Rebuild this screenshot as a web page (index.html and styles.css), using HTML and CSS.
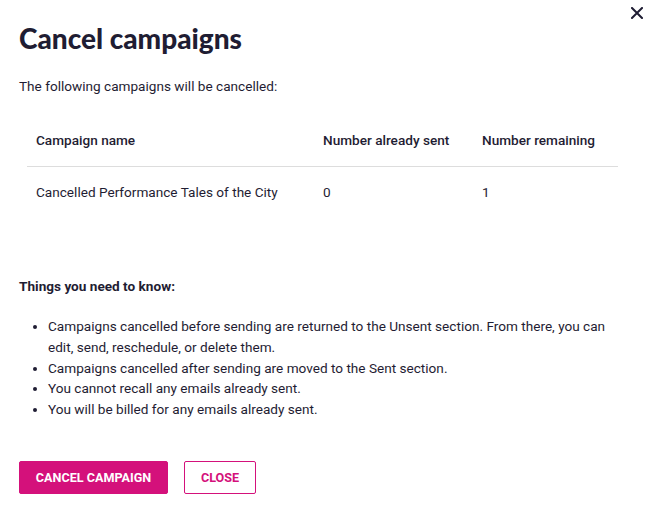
FILE: index.html
```html
<!DOCTYPE html>
<html>
<head>
<meta charset="utf-8">
<link rel="stylesheet" href="styles.css">
</head>
<body>
<div class="dialog">
  <button class="close-x" aria-label="Close">
    <svg width="12" height="12" viewBox="0 0 12 12"><path d="M1 1L11 11M11 1L1 11" stroke="#1f1d33" stroke-width="2" stroke-linecap="square"/></svg>
  </button>
  <h1 class="title">Cancel campaigns</h1>
  <p class="intro">The following campaigns will be cancelled:</p>
  <table class="campaigns">
    <thead>
      <tr><th class="c-name">Campaign name</th><th class="c-sent">Number already sent</th><th class="c-rem">Number remaining</th></tr>
    </thead>
    <tbody>
      <tr><td>Cancelled Performance Tales of the City</td><td>0</td><td>1</td></tr>
    </tbody>
  </table>
  <h2 class="know">Things you need to know:</h2>
  <ul class="notes">
    <li>Campaigns cancelled before sending are returned to the Unsent section. From there, you can edit, send, reschedule, or delete them.</li>
    <li>Campaigns cancelled after sending are moved to the Sent section.</li>
    <li>You cannot recall any emails already sent.</li>
    <li>You will be billed for any emails already sent.</li>
  </ul>
  <div class="actions">
    <button class="btn btn-primary">CANCEL CAMPAIGN</button>
    <button class="btn btn-outline">CLOSE</button>
  </div>
</div>
</body>
</html>
```

FILE: styles.css
```css
html, body {
  margin: 0;
  padding: 0;
  background: #ffffff;
}
body {
  font-family: Roboto, "Liberation Sans", sans-serif;
  color: #1f1d33;
  font-size: 13.6px;
}
.dialog {
  position: relative;
  padding: 22px 30px 0 19px;
}
.close-x {
  position: absolute;
  top: 7px;
  right: 5px;
  border: none;
  background: none;
  padding: 0;
  width: 12px;
  height: 12px;
  cursor: pointer;
}
.close-x svg { display: block; }
.title {
  margin: 0;
  font-family: Lato, "Noto Sans", sans-serif;
  font-weight: 900;
  font-size: 28px;
  line-height: 32px;
  color: #1f1d33;
}
.intro {
  margin: 22px 0 0;
  line-height: 20px;
}
.campaigns {
  margin: 18px 0 0 8px;
  width: 591px;
  border-collapse: collapse;
}
.campaigns th, .campaigns td {
  text-align: left;
  padding: 17px 9px;
  line-height: 18px;
  font-size: 13.6px;
}
.campaigns td {
  padding: 16px 9px 17px;
}
.campaigns th {
  font-weight: 500;
  border-bottom: 1px solid #dddddd;
}
.campaigns .c-name { width: 269px; }
.campaigns .c-sent { width: 141px; }
.know {
  margin: 58px 0 0;
  font-size: 13.6px;
  font-weight: 700;
  line-height: 20px;
}
.notes {
  margin: 20px 0 0;
  padding: 0 0 0 29px;
}
.notes li {
  line-height: 20.75px;
}
.actions {
  margin-top: 41px;
  display: flex;
  gap: 16px;
}
.btn {
  font-family: Roboto, "Liberation Sans", sans-serif;
  font-weight: 700;
  font-size: 12.6px;
  height: 33px;
  border-radius: 2px;
  cursor: pointer;
}
.btn-primary {
  background: #d4117b;
  color: #ffffff;
  border: 1px solid #d4117b;
  width: 149px;
}
.btn-outline {
  background: #ffffff;
  color: #d4117b;
  border: 1px solid #d4117b;
  width: 72px;
}
```
